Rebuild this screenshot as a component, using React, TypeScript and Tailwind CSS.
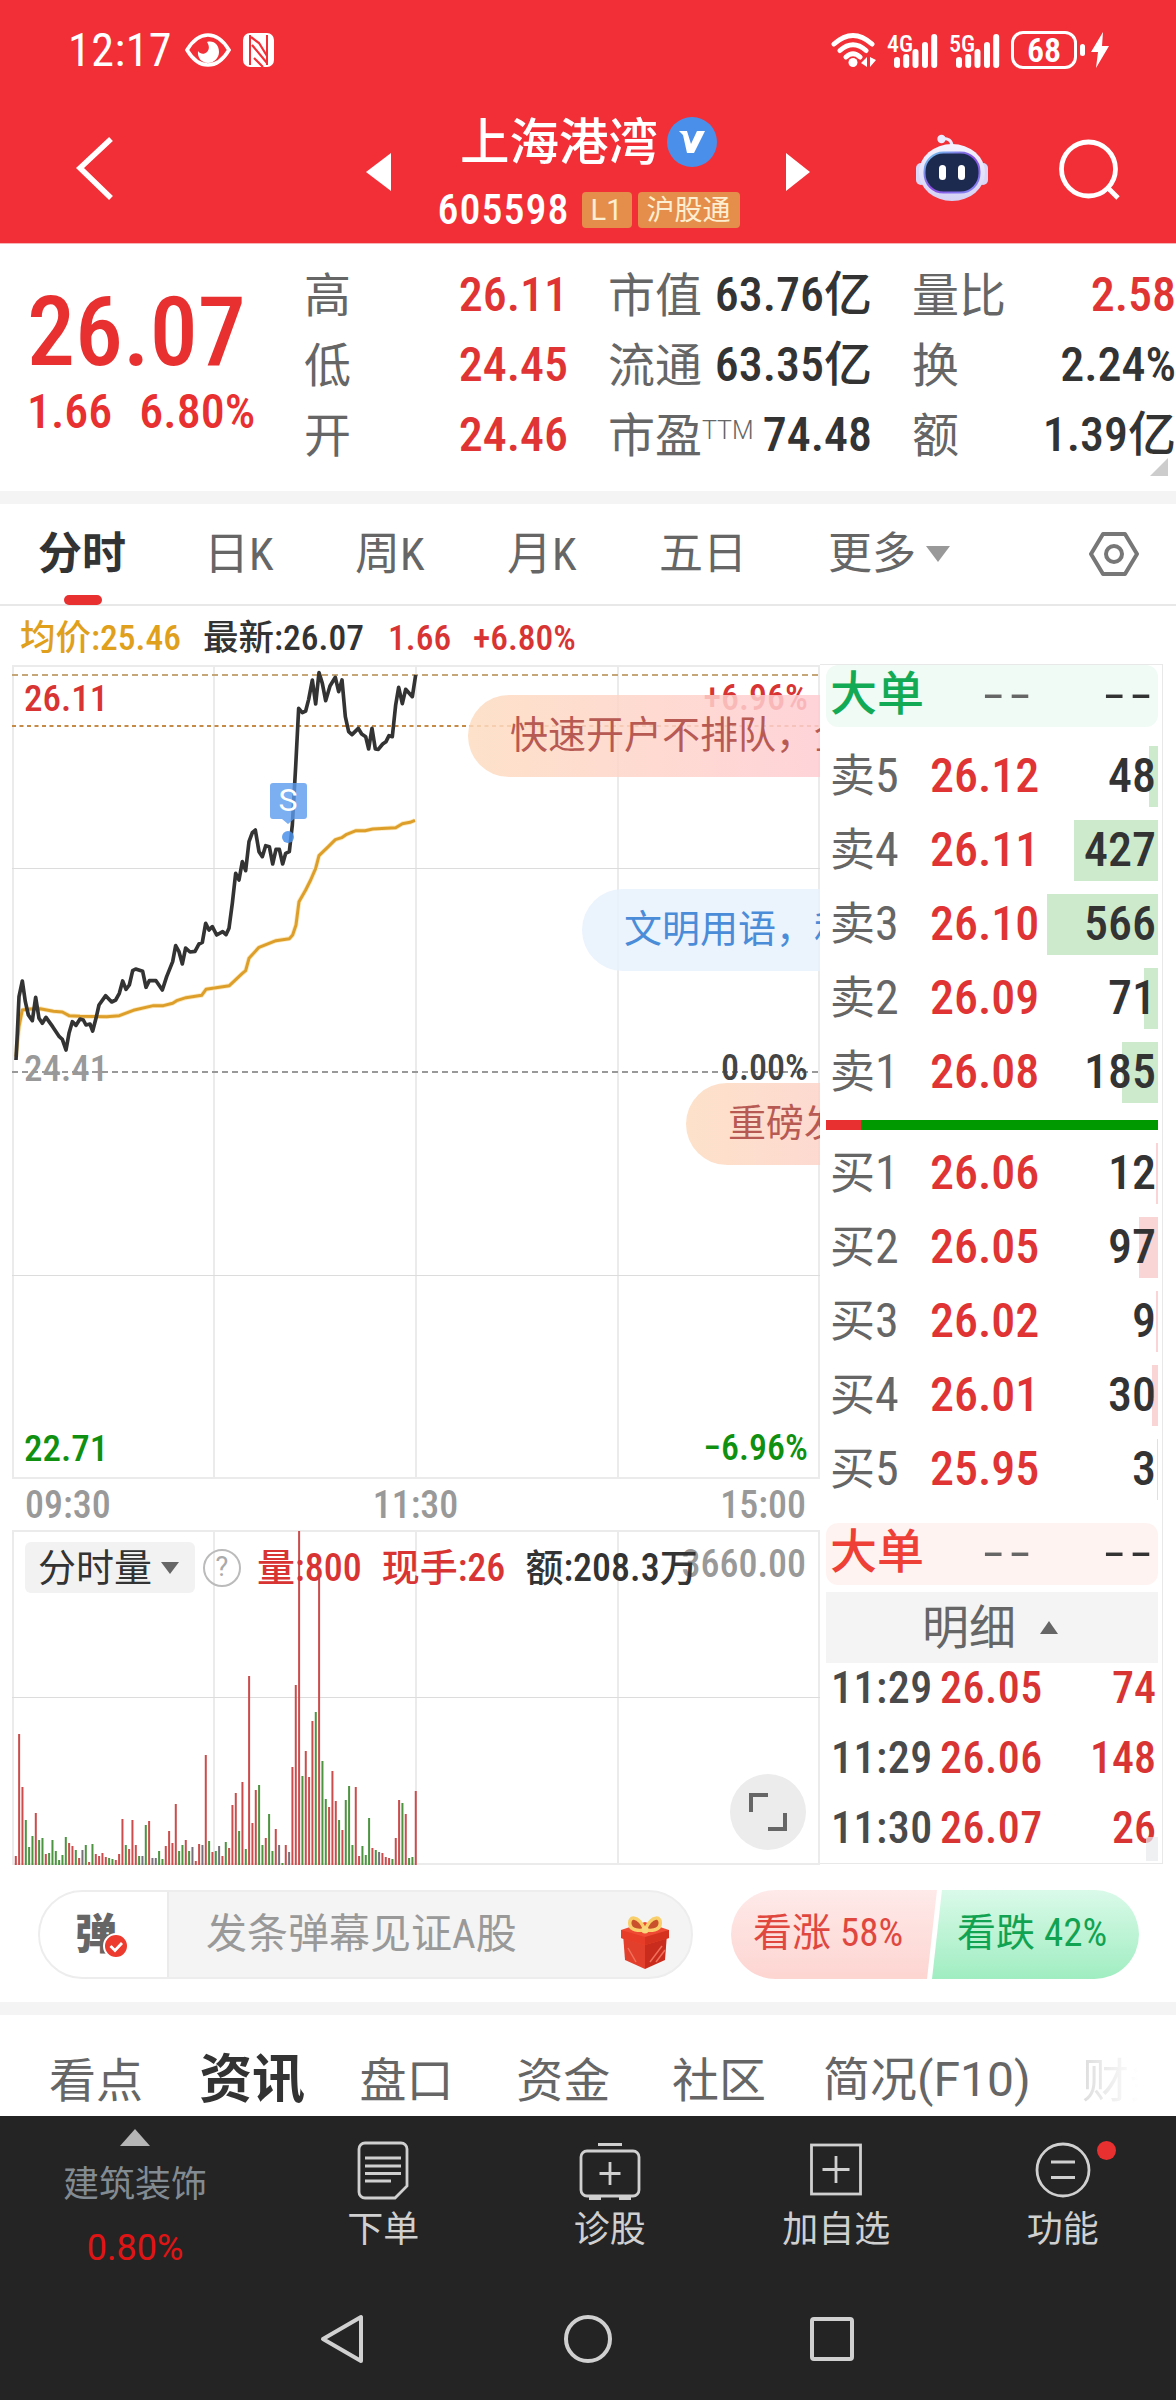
import React from 'react';
import clsx from 'clsx';

interface Level {
  name: string;
  price: string;
  volume: number;
}

interface Stat {
  label: React.ReactNode;
  value: string;
  up?: boolean;
}

const statColumns: Stat[][] = [
  [
    { label: '高', value: '26.11', up: true },
    { label: '低', value: '24.45', up: true },
    { label: '开', value: '24.46', up: true },
  ],
  [
    { label: '市值', value: '63.76亿' },
    { label: '流通', value: '63.35亿' },
    { label: <>市盈<span className="relative -top-[13px] font-['Roboto'] text-[25px] font-light">TTM</span></>, value: '74.48' },
  ],
  [
    { label: '量比', value: '2.58', up: true },
    { label: '换', value: '2.24%' },
    { label: '额', value: '1.39亿' },
  ],
];

const sells: Level[] = [
  { name: '卖5', price: '26.12', volume: 48 },
  { name: '卖4', price: '26.11', volume: 427 },
  { name: '卖3', price: '26.10', volume: 566 },
  { name: '卖2', price: '26.09', volume: 71 },
  { name: '卖1', price: '26.08', volume: 185 },
];

const buys: Level[] = [
  { name: '买1', price: '26.06', volume: 12 },
  { name: '买2', price: '26.05', volume: 97 },
  { name: '买3', price: '26.02', volume: 9 },
  { name: '买4', price: '26.01', volume: 30 },
  { name: '买5', price: '25.95', volume: 3 },
];

const ticks = [
  { time: '11:29', price: '26.05', volume: 74 },
  { time: '11:29', price: '26.06', volume: 148 },
  { time: '11:30', price: '26.07', volume: 26 },
];

// minute price / average price, plotted at 3x
const pricePoints =
  '48,1380 52,1300 57,1190 67,1143 76,1205 85,1245 97,1262 107,1192 117,1255 127,1270 138,1252 158,1280 178,1310 187,1318 198,1350 207,1300 217,1265 228,1276 240,1257 250,1260 258,1275 270,1272 278,1293 288,1255 297,1215 317,1187 335,1206 347,1200 358,1180 368,1143 378,1168 388,1155 398,1112 407,1107 428,1114 438,1162 448,1142 468,1142 487,1170 500,1130 518,1085 527,1037 537,1055 547,1092 557,1044 570,1056 585,1054 597,1032 607,1027 617,970 627,990 637,980 650,1005 668,995 678,1004 687,985 697,910 707,820 717,840 727,785 737,812 747,725 757,698 766,690 777,755 787,770 797,737 808,740 818,792 828,748 838,748 848,792 857,760 868,755 877,675 887,500 896,325 907,338 917,333 926,298 937,240 947,312 957,218 967,250 977,302 990,258 1006,232 1016,275 1026,240 1036,350 1046,395 1056,404 1075,385 1085,402 1097,410 1106,447 1116,385 1126,447 1135,448 1148,432 1158,425 1167,407 1177,410 1187,315 1196,262 1207,311 1217,268 1237,290 1247,225';
const avgPoints =
  '48,1370 57,1280 67,1230 90,1227 120,1226 160,1234 187,1236 207,1247 240,1249 320,1250 358,1247 400,1231 460,1217 490,1217 518,1210 530,1202 558,1193 605,1186 618,1168 688,1157 708,1138 727,1120 737,1112 747,1075 777,1042 828,1022 868,1016 878,1005 888,975 897,905 917,870 932,840 947,805 957,767 985,740 1006,719 1025,713 1040,703 1068,692 1095,692 1118,687 1187,683 1207,671 1230,667 1245,661';

// one entry per minute: colour letter + bar height
const volumes =
  'r9 r131 r78 g45 g18 g29 r52 g25 g27 r11 g12 g25 g14 g5 g10 g28 r22 r19 g15 r7 k15 g20 r3 g21 r11 r9 r12 r8 g7 g6 r5 r11 r46 g20 r16 r45 r20 g9 k9 g40 r44 k7 k7 g14 g6 r19 r34 r22 r61 g14 g20 r25 g14 k18 r4 r21 k20 r110 g24 r13 g14 k19 r9 g23 r17 r60 r72 g34 r83 g16 r189 r42 r75 g80 g20 r27 g51 g14 r36 k20 g2 r20 k13 r98 r180 r334 g89 r114 r88 r144 g153 r287 g104 g66 r58 r94 r64 g45 r35 g65 g79 g20 r78 r9 g19 g10 g47 r17 g15 k13 r12 r8 r7 g6 r27 r65 g62 r51 g7 g8 r74'.split(' ');

const volumeColors: Record<string, string> = { r: '#cb4c4c', g: '#4c9440', k: '#77707a' };

function SignalBars() {
  return (
    <svg width="44" height="34" viewBox="0 0 44 34" fill="#fff">
      <rect x="0" y="23" width="6" height="11" rx="3" />
      <rect x="9.2" y="20" width="6" height="14" rx="3" />
      <rect x="18.5" y="15" width="6" height="19" rx="3" />
      <rect x="28" y="8" width="6" height="26" rx="3" />
      <rect x="37.2" y="0" width="6" height="34" rx="3" />
    </svg>
  );
}

function StatusBar() {
  return (
    <div className="flex h-[100px] items-center pr-[67px] pl-[68px] text-white">
      <span className="w-[117px] text-[46px] leading-none tracking-[0.5px]">12:17</span>
      <svg width="46" height="34" viewBox="0 0 46 34">
        <path d="M2 17C8 7 15 2 23 2s15 5 21 15c-6 10-13 15-21 15S8 27 2 17Z" fill="none" stroke="#fff" strokeWidth="3.6" />
        <path d="M22 9c7-2 12 3 12 10 0 6-5 11-11 11s-11-5-10-12c2 3 6 4 9 1s2-7 0-10Z" fill="#fff" />
      </svg>
      <svg className="ml-3" width="31" height="34" viewBox="0 0 31 34">
        <rect width="31" height="34" rx="7" fill="#fff" />
        <path d="M7 2v30M24 2v30" stroke="#f22f37" strokeWidth="2" />
        <path d="M8 4l8 6 8 13M9 12l15 18M11 25l9 9" stroke="#f22f37" strokeWidth="2.2" fill="none" />
      </svg>
      <svg className="ml-auto" width="45" height="36" viewBox="0 0 45 36" fill="none" stroke="#fff" strokeWidth="5" strokeLinecap="round">
        <path d="M3 12Q22 -5 41 12M9 18.5Q22 7 35 18.5M15 25Q22 18.500 29 25" />
        <circle cx="22" cy="30.500" r="4.500" fill="#fff" stroke="none" />
        <path d="M36 25v10l-6-4ZM39 25v10l6-7Z" fill="#fff" stroke="none" />
      </svg>
      <div className="relative ml-[18px] pt-px">
        <SignalBars />
        <span className="absolute -top-[1px] -left-[7px] text-[24px] leading-none font-medium">4G</span>
      </div>
      <div className="relative ml-[18px] pt-px">
        <SignalBars />
        <span className="absolute -top-[1px] -left-[7px] text-[24px] leading-none font-medium">5G</span>
      </div>
      <div className="ml-[11px] flex h-[38px] w-[66px] items-center justify-center rounded-[12px] border-[3.500px] border-white text-[34px] leading-none font-semibold">68</div>
      <div className="ml-[3px] h-3 w-[5px] rounded-sm bg-white" />
      <svg className="ml-[6px]" width="18" height="36" viewBox="0 0 18 36" fill="#fff">
        <path d="M12 0L0 20h7L5 36 18 14h-7Z" />
      </svg>
    </div>
  );
}

function Robot() {
  return (
    <svg width="74" height="68" viewBox="0 0 74 68">
      <defs>
        <linearGradient id="shell" x1="0" y1="0" x2="0" y2="1">
          <stop offset="0" stopColor="#f6f4ff" />
          <stop offset="1" stopColor="#d3d0f4" />
        </linearGradient>
        <linearGradient id="visor" x1="0" y1="0" x2="1" y2="1">
          <stop offset="0" stopColor="#6fd0f0" />
          <stop offset="0.5" stopColor="#8a4be0" />
          <stop offset="1" stopColor="#7f8df5" />
        </linearGradient>
      </defs>
      <path d="M26 4.500q11-1 11 8" fill="none" stroke="#eceaff" strokeWidth="3" />
      <circle cx="26.500" cy="5" r="4.200" fill="#eceaff" />
      <rect x="1" y="29" width="10" height="22" rx="5" fill="#d9d6f7" />
      <rect x="63" y="29" width="10" height="22" rx="5" fill="#d9d6f7" />
      <ellipse cx="37" cy="38.500" rx="33" ry="28.500" fill="url(#shell)" />
      <rect x="9.500" y="18.500" width="55" height="40" rx="19" fill="#1d2a50" stroke="url(#visor)" strokeWidth="2" />
      <rect x="24" y="31" width="7" height="15" rx="3.500" fill="#fff" />
      <rect x="43" y="31" width="7" height="15" rx="3.500" fill="#fff" />
    </svg>
  );
}

function TitleBar() {
  return (
    <div className="flex h-[143px] items-start pt-[15px] text-white">
      <svg className="mt-[19px] ml-[74px]" width="42" height="68" viewBox="0 0 42 68" fill="none" stroke="#fff" strokeWidth="5.500">
        <path d="M37 5L6 34l31 30" />
      </svg>
      <svg className="mt-[38px] ml-[250px]" width="25" height="38" viewBox="0 0 25 38" fill="#fff">
        <path d="M25 0v38L0 19Z" />
      </svg>
      <div className="ml-[46px] flex w-[303px] flex-col items-center">
        <div className="flex items-center">
          <h1 className="pt-[3px] text-[49.500px] leading-[50px] font-medium">上海港湾</h1>
          <span className="ml-[9px] flex h-[50px] w-[50px] items-center justify-center rounded-full bg-[#4a90ea]">
            <svg width="26" height="24" viewBox="0 0 26 24">
              <path d="M0 1h8l4 13 6-13h8L15 23H8L4 5Z" fill="#fff" />
            </svg>
          </span>
        </div>
        <div className="mt-[24px] flex items-center">
          <span className="w-[144px] text-[42px] leading-[36px] font-medium tracking-[1px]">605598</span>
          <span className="flex h-9 w-[50px] items-center justify-center rounded bg-[#e58e4b] font-['Roboto'] text-[29px] leading-none text-[#fdeed2]">L1</span>
          <span className="ml-[6px] flex h-9 w-[102px] items-center justify-center rounded bg-[#e58e4b] pt-px text-[28px] leading-none text-[#fdeed2]">沪股通</span>
        </div>
      </div>
      <svg className="mt-[38px] ml-[46px]" width="24" height="38" viewBox="0 0 24 38" fill="#fff">
        <path d="M0 0v38L24 19Z" />
      </svg>
      <div className="mt-[19px] ml-[105px]">
        <Robot />
      </div>
      <svg className="mt-[23px] ml-[70px]" width="62" height="62" viewBox="0 0 62 62" fill="none" stroke="#fff" strokeWidth="4.800">
        <circle cx="29.500" cy="31" r="27" />
        <path d="M49 50l10 10" />
      </svg>
    </div>
  );
}

function Quote() {
  return (
    <section className="relative flex h-[248px] border-t border-[#f7b5b8] bg-white">
      <div className="w-[304px] pt-[40px] pl-[27px] font-medium text-[#e83030]">
        <div className="text-[96px] leading-none">26.07</div>
        <div className="mt-2 flex gap-[27px] text-[48px] leading-none">
          <span>1.66</span>
          <span>6.80%</span>
        </div>
      </div>
      <div className="flex gap-[40px] pt-4">
        {statColumns.map((column, i) => (
          <div key={i} className="w-[264px]">
            {column.map((stat) => (
              <div key={stat.value} className="flex h-[70px] items-center justify-between whitespace-nowrap">
                <span className="text-[47px] leading-none text-[#666]">{stat.label}</span>
                <span className={clsx('text-[48px] leading-none font-medium', stat.up ? 'text-[#e03434]' : 'text-[#333]')}>{stat.value}</span>
              </div>
            ))}
          </div>
        ))}
      </div>
      <svg className="absolute right-2 bottom-[15px]" width="18" height="18" viewBox="0 0 18 18">
        <path d="M18 0v18H0Z" fill="#ccc" />
      </svg>
    </section>
  );
}

function PeriodTabs() {
  return (
    <nav className="flex h-[102px] items-center border-b-2 border-[#e8e8e8] pl-[38px] text-[45px] leading-none text-[#666]">
      <span className="relative flex h-full w-[166px] items-center text-[44px] font-bold text-[#333]">
        分时
        <i className="absolute -bottom-px left-[26px] h-[10px] w-[38px] rounded-full bg-[#e83030]" />
      </span>
      <span className="w-[151px]">日K</span>
      <span className="w-[152px]">周K</span>
      <span className="w-[152px]">月K</span>
      <span className="w-[169px] text-[44px]">五日</span>
      <span className="text-[44px]">更多</span>
      <svg className="ml-[10px]" width="24" height="16" viewBox="0 0 24 16">
        <path d="M0 0h24L12 16Z" fill="#999" />
      </svg>
      <svg className="ml-[139px]" width="50" height="48" viewBox="0 0 50 48" fill="none" stroke="#777" strokeWidth="4" strokeLinejoin="round">
        <path d="M14 4h22l12 20-12 20H14L2 24Z" />
        <circle cx="25" cy="24" r="8" />
      </svg>
    </nav>
  );
}

function Bubble({ text, className }: { text: string; className: string }) {
  return (
    <div className={clsx('absolute right-0 h-[82px] overflow-hidden rounded-l-full pl-[42px] text-[38px] leading-[80px] whitespace-nowrap', className)}>{text}</div>
  );
}

function PriceChart() {
  return (
    <div className="relative h-[814px] w-[808px] overflow-hidden text-[37px] leading-none font-medium">
      <svg className="block" width="808" height="814" viewBox="0 0 808 814" fill="none">
        <path d="M1 0v814M202 0v814M404 0v814M606 0v814M807 0v814M0 1h808M0 813h808" stroke="#ebebeb" strokeWidth="2" />
        <path d="M0 203.500h808M0 610.500h808" stroke="#dcdcdc" strokeWidth="1.200" />
        <path d="M0 10h808" stroke="#c4a678" strokeWidth="2" strokeDasharray="6 4" />
        <path d="M0 61h808" stroke="#c58a46" strokeWidth="2" strokeDasharray="4 3.500" />
        <path d="M0 407h808" stroke="#999" strokeWidth="2" strokeDasharray="6 4" />
        <g transform="translate(-12 -65) scale(0.33333)" strokeLinejoin="round">
          <polyline points={avgPoints} stroke="#fbe9c0" strokeWidth="14" />
          <polyline points={avgPoints} stroke="#dd9f2a" strokeWidth="9" />
          <polyline points={pricePoints} stroke="#333" strokeWidth="11" />
        </g>
        <path d="M261 118h31a3 3 0 0 1 3 3v30a3 3 0 0 1-3 3h-10l-6 5-6-5h-9a3 3 0 0 1-3-3v-30a3 3 0 0 1 3-3Z" fill="#5a9bee" fillOpacity="0.800" />
        <circle cx="276" cy="172" r="6" fill="#4a90ea" fillOpacity="0.850" />
      </svg>
      <span className="absolute top-[119px] left-[258px] w-9 text-center font-['Roboto'] text-[32px] font-normal text-white">S</span>
      <span className="absolute top-[15px] left-3 text-[#d83434]">26.11</span>
      <span className="absolute top-[385px] left-3 text-[#999]">24.41</span>
      <span className="absolute top-[765px] left-3 text-[#0f9010]">22.71</span>
      <span className="absolute top-[15px] right-3 text-[36px] text-[#d83434]">+6.96%</span>
      <span className="absolute top-[385px] right-3 text-[36px] text-[#444]">0.00%</span>
      <span className="absolute top-[765px] right-3 text-[36px] text-[#0f9010]">−6.96%</span>
      <Bubble text="快速开户不排队，全程" className="top-[30px] w-[352px] bg-linear-to-r from-[#fddcc0]/85 to-[#ffccd2]/85 font-normal text-[#b85a54]" />
      <Bubble text="文明用语，和谐" className="top-[224px] w-[238px] bg-[#e8f1fd]/85 font-normal text-[#4a8cd8]" />
      <Bubble text="重磅发布" className="top-[418px] w-[134px] bg-linear-to-r from-[#fddcc0]/85 to-[#fdd3c8]/85 font-normal text-[#b85a54]" />
    </div>
  );
}

function VolumeChart() {
  return (
    <div className="relative h-[335px] w-[808px] overflow-hidden">
      <svg className="block" width="808" height="335" viewBox="0 0 808 335">
        <path d="M1 0v335M202 0v335M404 0v335M606 0v335M807 0v335M0 1h808M0 334h808" stroke="#ebebeb" strokeWidth="2" />
        <path d="M0 167.500h808" stroke="#dcdcdc" strokeWidth="1.200" />
        {volumes.map((v, i) => {
          const h = Number(v.slice(1));
          return <rect key={i} x={2.800 + i * 3.333} y={335 - h} width="2" height={h} fill={volumeColors[v[0]]} />;
        })}
      </svg>
      <span className="absolute top-[15px] right-[14px] text-[38px] leading-none font-medium text-[#999]">3660.00</span>
      <div className="absolute top-3 left-[13px] flex h-[51px] items-center whitespace-nowrap">
        <button className="flex h-full w-[170px] items-center rounded-md bg-[#f2f2f2] pl-[13px] text-[38px] leading-none text-[#333]">
          分时量
          <svg className="ml-[9px]" width="18" height="12" viewBox="0 0 18 12">
            <path d="M0 0h18L9 12Z" fill="#666" />
          </svg>
        </button>
        <span className="ml-2 flex h-[38px] w-[38px] items-center justify-center rounded-full border-[2.500px] border-[#bbb] font-['Roboto'] text-[27px] leading-none text-[#aaa]">?</span>
        <div className="ml-[16px] flex gap-[20px] text-[38px] leading-none font-medium text-[#d83434]">
          <span>量:800</span>
          <span>现手:26</span>
          <span className="text-[#333]">额:208.3万</span>
        </div>
      </div>
      <button className="absolute top-[244px] left-[718px] flex h-[76px] w-[76px] items-center justify-center rounded-full bg-[#ececec]">
        <svg width="40" height="40" viewBox="0 0 40 40" fill="none" stroke="#666" strokeWidth="4">
          <path d="M3 20V3h17M37 21v16H20" />
        </svg>
      </button>
    </div>
  );
}

function BigOrder({ tone }: { tone: 'sell' | 'buy' }) {
  return (
    <div className={clsx('flex h-[62px] items-center rounded-[12px] pb-[6px] pl-[4px] text-[47px] leading-none', tone === 'sell' ? 'bg-[#f1fbf6] text-[#12aa55]' : 'bg-[#fff3f2] text-[#ee4036]')}>
      <span className="w-[130px] font-medium">大单</span>
      <span className="w-[77px] text-right text-[#666]">
        <span className="inline-block origin-right scale-x-[1.750] tracking-[3.600px]">--</span>
      </span>
      <span className="ml-auto text-right text-[#333]">
        <span className="inline-block origin-right scale-x-[1.750] tracking-[3.600px]">--</span>
      </span>
    </div>
  );
}

function Book({ levels, tone }: { levels: Level[]; tone: 'sell' | 'buy' }) {
  return (
    <ul>
      {levels.map((level) => (
        <li key={level.name} className="relative flex h-[74px] items-center pr-[2px] pl-[4px] text-[48px] leading-none">
          <i
            className={clsx('absolute right-0 h-[61px]', tone === 'sell' ? 'bg-[#cdeacd]' : 'bg-[#f9d5d5]')}
            style={{ width: level.volume * 0.196 }}
          />
          <span className="relative w-[100px] text-[#666]">
            <span className="text-[45px]">{level.name[0]}</span>
            {level.name[1]}
          </span>
          <span className="relative font-medium text-[#e03434]">{level.price}</span>
          <span className="relative ml-auto font-medium text-[#333]">{level.volume}</span>
        </li>
      ))}
    </ul>
  );
}

function OrderPanel() {
  return (
    <aside className="-mt-px h-[1200px] w-[343px] border border-l-0 border-[#e8e8e8] pr-[4px] pl-[6px]">
      <BigOrder tone="sell" />
      <div className="mt-3">
        <Book levels={sells} tone="sell" />
      </div>
      <div className="mt-[11px] flex h-[10px] bg-[#009a00]">
        <div className="w-[35px] bg-[#e83030]" />
      </div>
      <div className="mt-[6px]">
        <Book levels={buys} tone="buy" />
      </div>
      <div className="mt-[17px]">
        <BigOrder tone="buy" />
      </div>
      <div className="mt-[7px] flex h-[71px] items-center bg-[#f4f4f4] pl-[96px] text-[47px] leading-none text-[#666]">
        明细
        <svg className="ml-[24px]" width="18" height="13" viewBox="0 0 18 13">
          <path d="M9 0l9 13H0Z" fill="#666" />
        </svg>
      </div>
      <ul className="relative -mt-[10px] text-[44px] leading-none font-medium">
        {ticks.map((tick) => (
          <li key={tick.price} className="flex h-[70px] items-center pr-[2px] pl-[5px] text-[#d83434]">
            <span className="w-[109px] tracking-[0.500px] text-[#4a4a4a]">{tick.time}</span>
            <span className="tracking-[0.500px]">{tick.price}</span>
            <span className="ml-auto">{tick.volume}</span>
          </li>
        ))}
        <i className="absolute right-0 bottom-[2px] h-6 w-3 bg-[#e8eaed]/70" />
      </ul>
    </aside>
  );
}

function Gift() {
  return (
    <svg width="50" height="54" viewBox="0 0 50 54">
      <path d="M3 18l22 7v28L5 44Z" fill="#e2402c" />
      <path d="M47 18l-22 7v28l20-9Z" fill="#c92c1c" />
      <path d="M1 14l24-8 24 8v8l-24 7-24-7Z" fill="#ef4a34" />
      <path d="M1 14l24 7v8L1 22Z" fill="#e63c28" />
      <path d="M49 14l-24 7v8l24-7Z" fill="#d5331f" />
      <path d="M30 46l12-16M36 46l9-12M8 32l8 14" stroke="#f0705a" strokeWidth="1.500" />
      <path d="M25 14C18-2 8 0 10 9c1 5 8 6 15 5ZM25 14C32-2 42 0 40 9c-1 5-8 6-15 5Z" fill="#c9512c" stroke="#f8cf6a" strokeWidth="3.500" />
      <circle cx="25" cy="14" r="3.500" fill="#f9d67c" />
    </svg>
  );
}

function DanmuBar() {
  return (
    <div className="mt-[26px] flex h-[89px] items-center pl-[38px]">
      <div className="flex h-full w-[655px] items-center overflow-hidden rounded-full border-2 border-[#ededed] bg-[#f4f4f4]">
        <div className="relative flex h-full w-[129px] items-center border-r-2 border-[#ebebeb] bg-white pl-[35px]">
          <span className="text-[42px] leading-none font-black text-[#666]">弹</span>
          <svg className="absolute top-[41px] left-[63px]" width="26" height="26" viewBox="0 0 26 26">
            <circle cx="13" cy="13" r="12" fill="#ee3b2f" stroke="#fff" strokeWidth="2" />
            <path d="M7.500 13l4.500 4.500 7-7.500" fill="none" stroke="#fff" strokeWidth="2.800" />
          </svg>
        </div>
        <span className="pl-[37px] text-[41px] leading-none text-[#999]">发条弹幕见证A股</span>
        <span className="mt-[17px] ml-auto pr-[21px]">
          <Gift />
        </span>
      </div>
      <div className="relative ml-[38px] h-full w-[408px]">
        <svg width="408" height="89" viewBox="0 0 408 89">
          <defs>
            <linearGradient id="bull" x1="0" y1="0" x2="0" y2="1">
              <stop offset="0" stopColor="#feeae9" />
              <stop offset="1" stopColor="#fdd5d1" />
            </linearGradient>
            <linearGradient id="bear" x1="0" y1="0" x2="0" y2="1">
              <stop offset="0" stopColor="#dafae9" />
              <stop offset="1" stopColor="#a0edc1" />
            </linearGradient>
          </defs>
          <path d="M44.500 0H206l-10 89H44.500a44.500 44.500 0 0 1 0-89Z" fill="url(#bull)" />
          <path d="M211 0h152.500a44.500 44.500 0 0 1 0 89H201Z" fill="url(#bear)" />
        </svg>
        <div className="absolute inset-0 flex items-center pb-[2px] pl-[22px] text-[39px] leading-none">
          <span className="w-[204px] text-[#e0483f]">看涨 58%</span>
          <span className="text-[#12a352]">看跌 42%</span>
        </div>
      </div>
    </div>
  );
}

function NewsTabs() {
  return (
    <nav className="relative flex h-[101px] items-center overflow-hidden pt-[29px] pl-[49px] text-[47px] leading-none whitespace-nowrap text-[#666]">
      <span className="w-[160px]">看点</span>
      <span className="w-[171px] text-[53px] font-bold text-[#333]">资讯</span>
      <span className="w-[167px]">盘口</span>
      <span className="w-[166px]">资金</span>
      <span className="w-[161px]">社区</span>
      <span className="w-[276px]">简况<span className="font-['Roboto'] text-[48px]">(F10)</span></span>
      <span className="bg-linear-to-r from-[#ddd] to-white to-60% bg-clip-text text-transparent">财务</span>
    </nav>
  );
}

const actions = [
  {
    label: '下单',
    icon: (
      <>
        <path d="M14 3h36a6 6 0 0 1 6 6v37L44 58H14a6 6 0 0 1-6-6V9a6 6 0 0 1 6-6Z" />
        <path d="M14 18h36M14 26h36M14 33.500h36M14 41h26" />
      </>
    ),
  },
  {
    label: '诊股',
    icon: (
      <>
        <rect x="3" y="11" width="58" height="45" rx="6" />
        <path d="M20 4.500h24M32 22v23M21.500 33.500h21M11 58.500h12M41 58.500h12" />
      </>
    ),
  },
  {
    label: '加自选',
    icon: (
      <>
        <rect x="7.500" y="5" width="49" height="49" />
        <path d="M32 16v27M18.500 29.500h27" />
      </>
    ),
  },
  {
    label: '功能',
    icon: (
      <>
        <circle cx="32" cy="30" r="26" />
        <path d="M20 22h24M20 37.500h24" />
      </>
    ),
  },
];

function BottomBar() {
  return (
    <footer className="h-[284px] bg-[#242424] text-[36px] leading-none text-[#d0d0d0]">
      <div className="flex h-[160px]">
        <div className="flex w-[270px] flex-col items-center pt-[13px]">
          <svg width="30" height="17" viewBox="0 0 30 17">
            <path d="M15 0l15 17H0Z" fill="#b5b5b5" />
          </svg>
          <span className="mt-[21px] text-[#838b92]">建筑装饰</span>
          <span className="mt-[27px] font-['Roboto'] text-[#e01414]">0.80%</span>
        </div>
        {actions.map((action) => (
          <div key={action.label} className="relative flex w-[226.500px] flex-col items-center pt-[24px]">
            <svg width="64" height="62" viewBox="0 0 64 62" fill="none" stroke="#d0d0d0" strokeWidth="2.800">
              {action.icon}
            </svg>
            <span className="mt-[10px]">{action.label}</span>
            {action.label === '功能' && <i className="absolute top-[25px] right-[60px] h-[19px] w-[19px] rounded-full bg-[#e83030]" />}
          </div>
        ))}
      </div>
      <div className="flex items-center pt-[36px] pl-[318px]">
        <svg width="48" height="54" viewBox="0 0 48 54" fill="none" stroke="#d0d0d0" strokeWidth="4" strokeLinejoin="round">
          <path d="M43 5v44L5 27Z" />
        </svg>
        <svg className="ml-[196px]" width="52" height="52" viewBox="0 0 52 52" fill="none" stroke="#d0d0d0" strokeWidth="4">
          <circle cx="26" cy="26" r="22" />
        </svg>
        <svg className="ml-[194px]" width="48" height="48" viewBox="0 0 48 48" fill="none" stroke="#d0d0d0" strokeWidth="4">
          <rect x="4" y="4" width="40" height="40" rx="2" />
        </svg>
      </div>
    </footer>
  );
}

export default function App() {
  return (
    <div className="h-[2400px] w-[1176px] overflow-hidden bg-white font-['Roboto_Condensed','Noto_Sans_CJK_SC',sans-serif]">
      <header className="bg-[#f22f37]">
        <StatusBar />
        <TitleBar />
      </header>
      <Quote />
      <div className="h-[13px] bg-[#f4f4f4]" />
      <PeriodTabs />
      <div className="flex h-[59px] items-center pt-[7px] pl-[20px] text-[35.500px] leading-none font-medium text-[#d83434]">
        <span className="w-[183px] text-[#e0a01c]">均价:25.46</span>
        <span className="w-[185px] text-[#333]">最新:26.07</span>
        <span className="w-[85px]">1.66</span>
        <span>+6.80%</span>
      </div>
      <main className="flex h-[1199px] pl-3">
        <div>
          <PriceChart />
          <div className="flex h-[51px] items-center justify-between pr-[14px] pl-[13px] text-[38px] leading-none font-medium text-[#999]">
            <span>09:30</span>
            <span>11:30</span>
            <span>15:00</span>
          </div>
          <VolumeChart />
        </div>
        <OrderPanel />
      </main>
      <DanmuBar />
      <div className="mt-[23px] h-[13px] bg-[#f4f4f4]" />
      <NewsTabs />
      <BottomBar />
    </div>
  );
}
